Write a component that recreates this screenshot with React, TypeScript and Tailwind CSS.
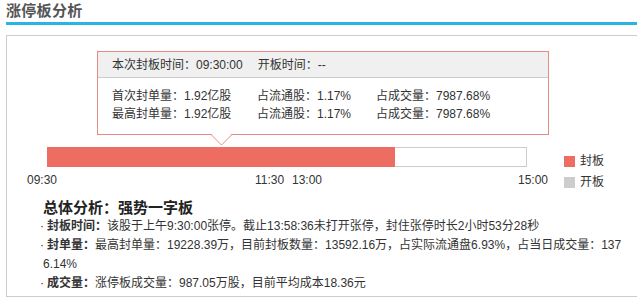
import React from "react";

const FONT = { fontFamily: '"Liberation Sans", "Noto Sans CJK SC", sans-serif' };

export default function App() {
  return (
    <div className="w-[637px] h-[306px] overflow-hidden bg-white text-[#333]" style={FONT}>
      {/* Title */}
      <div className="ml-[6px] h-[25px] border-b-[3px] border-[#29b5e2] w-[640px]">
        <div className="text-[15px] font-bold text-[#555] leading-[20px] pt-[1px] tracking-[0.3px]">涨停板分析</div>
      </div>
      {/* Box */}
      <div className="ml-[6px] mt-[10px] w-[650px] h-[262px] border-t border-l border-b border-[#cccccc]">
        <div className="pt-[15px] pl-[90px]">
          <div className="relative w-[452px] h-[84px] border border-[#e88a84] bg-white text-[12px]">
            <div className="h-[26px] bg-[#f0f0f0] border-b border-[#cccccc] pl-[14px] flex items-center leading-[16px] pt-[1px]">
              <span>本次封板时间：09:30:00</span>
              <span className="ml-[15px]">开板时间：--</span>
            </div>
            <div className="pl-[14px] pt-[9px] leading-[18px]">
              <div className="flex">
                <span className="w-[145px]">首次封单量：1.92亿股</span>
                <span className="w-[119px]">占流通股：1.17%</span>
                <span>占成交量：7987.68%</span>
              </div>
              <div className="flex">
                <span className="w-[145px]">最高封单量：1.92亿股</span>
                <span className="w-[119px]">占流通股：1.17%</span>
                <span>占成交量：7987.68%</span>
              </div>
            </div>
            <svg className="absolute left-[113px] top-[82px]" width="22" height="12" viewBox="0 0 22 12">
              <polygon points="0.5,0 10.5,10.5 20.5,0" fill="#ffffff" />
              <polyline points="0,0.5 10.5,11 21,0.5" fill="none" stroke="#e88a84" strokeWidth="1" />
            </svg>
          </div>
        </div>
        {/* Bar + legend */}
        <div className="flex mt-[12px]">
          <div className="w-[550px]">
            <div className="ml-[40px] w-[480px] h-[20px] border border-[#cccccc] bg-white flex">
              <div className="w-[348px] -ml-px -mt-px h-[20px] bg-[#ed6d62]" />
            </div>
            <div className="relative h-[16px] mt-[5px] text-[12px] leading-[16px]">
              <span className="absolute left-[20px]">09:30</span>
              <span className="absolute left-[248px]">11:30</span>
              <span className="absolute left-[285px]">13:00</span>
              <span className="absolute left-[511px]">15:00</span>
            </div>
          </div>
          <div className="ml-[7px] mt-[4px] text-[12px] leading-[21px]">
            <div className="flex items-center">
              <span className="w-[11px] h-[11px] bg-[#ed6d62]" />
              <span className="ml-[5px]">封板</span>
            </div>
            <div className="flex items-center">
              <span className="w-[11px] h-[11px] bg-[#cccccc]" />
              <span className="ml-[5px]">开板</span>
            </div>
          </div>
        </div>
        {/* Analysis */}
        <div className="mt-[5px] pl-[30px] text-[12px] leading-[19px]">
          <div className="ml-[6px] text-[15px] font-bold leading-[19px] text-[#222]">总体分析：强势一字板</div>
          <div className="whitespace-nowrap">
            <span className="inline-block w-[10px] text-center">·</span>
            <b>封板时间：</b>该股于上午9:30:00张停。截止13:58:36未打开张停，封住张停时长2小时53分28秒
          </div>
          <div className="whitespace-nowrap">
            <span className="inline-block w-[10px] text-center">·</span>
            <b>封单量：</b>最高封单量：19228.39万，目前封板数量：13592.16万，占实际流通盘6.93%，占当日成交量：137
          </div>
          <div className="ml-[6px]">6.14%</div>
          <div className="whitespace-nowrap">
            <span className="inline-block w-[10px] text-center">·</span>
            <b>成交量：</b>涨停板成交量：987.05万股，目前平均成本18.36元
          </div>
        </div>
      </div>
    </div>
  );
}
